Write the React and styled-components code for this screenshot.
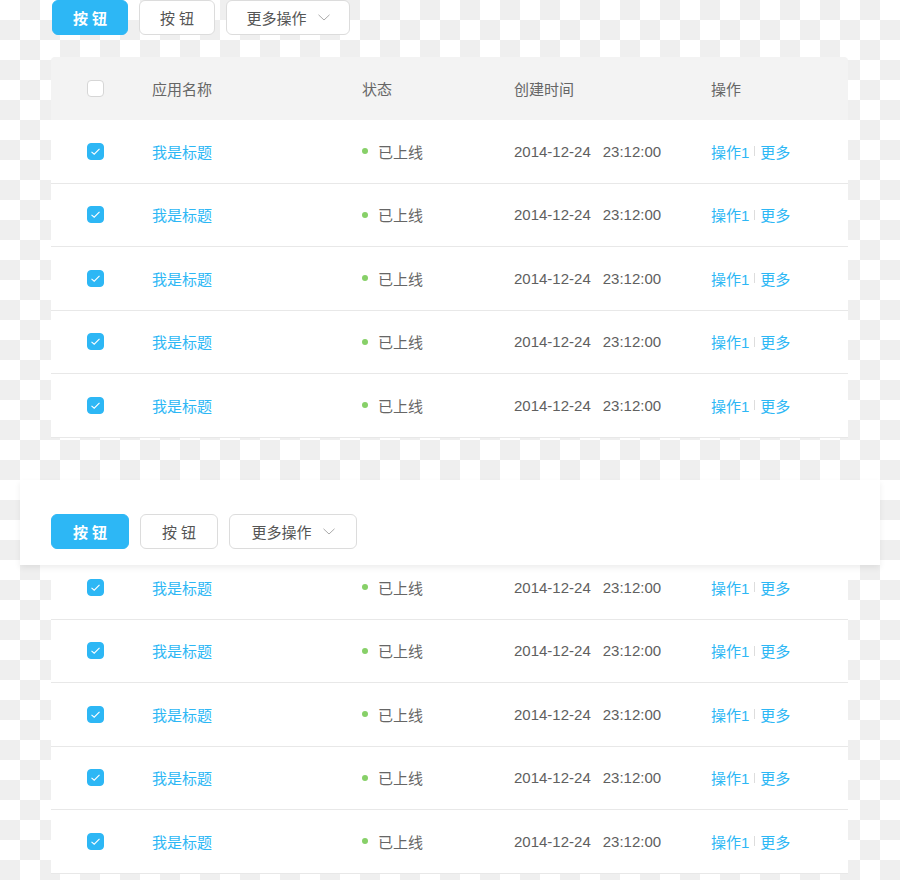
import styled, { createGlobalStyle } from 'styled-components';

const GlobalStyle = createGlobalStyle`
  body {
    margin: 0;
    font-family: "Liberation Sans", "Noto Sans CJK SC", sans-serif;
    background: repeating-conic-gradient(#efefef 0 25%, #ffffff 0 50%) 0 0 / 40px 40px;
  }
`;

const Page = styled.div`
  width: 900px;
  height: 880px;
  overflow: hidden;
`;

const TopToolbar = styled.div`
  display: flex;
  gap: 11px;
  padding-left: 52px;
  height: 35px;
`;

const FloatingToolbar = styled.div`
  position: relative;
  z-index: 2;
  display: flex;
  gap: 11px;
  margin: 42px 20px 0;
  padding: 34px 0 16px 31px;
  background: #ffffff;
  box-shadow: 0 3px 6px rgba(0, 0, 0, 0.07);
`;

const Button = styled.button`
  display: flex;
  align-items: center;
  justify-content: center;
  gap: 11px;
  box-sizing: border-box;
  height: 35px;
  width: ${(p) => p.$w}px;
  padding: 0;
  border-radius: 6px;
  font-family: inherit;
  font-size: 15px;
  cursor: pointer;
  border: 1px solid ${(p) => (p.$primary ? '#2db7f5' : '#dcdcdc')};
  background: ${(p) => (p.$primary ? '#2db7f5' : '#ffffff')};
  color: ${(p) => (p.$primary ? '#ffffff' : '#555555')};
  font-weight: ${(p) => (p.$primary ? 600 : 400)};
`;

const Table = styled.div`
  width: 797px;
  margin-left: 51px;
  margin-top: ${(p) => p.$top}px;
  position: relative;
  z-index: 1;
`;

const Row = styled.div`
  display: grid;
  grid-template-columns: 65px 210px 152px 197px 1fr;
  align-items: center;
  box-sizing: border-box;
  padding-left: 36px;
  height: ${(p) => (p.$head ? 63 : 63.5)}px;
  background: ${(p) => (p.$head ? '#f3f3f3' : '#ffffff')};
  border-radius: ${(p) => (p.$head ? '4px 4px 0 0' : '0')};
  border-bottom: ${(p) => (p.$head ? 'none' : '1px solid #e8e8e8')};
  font-size: 15px;
  color: #666666;
`;

const Box = styled.span`
  display: flex;
  align-items: center;
  justify-content: center;
  box-sizing: border-box;
  width: 17px;
  height: 17px;
  border-radius: 4px;
  background: ${(p) => (p.$checked ? '#2db7f5' : '#ffffff')};
  border: 1px solid ${(p) => (p.$checked ? '#2db7f5' : '#d6d6d6')};
`;

const Title = styled.span`
  color: #2db7f5;
`;

const Status = styled.span`
  display: flex;
  align-items: center;
  gap: 10px;
  &::before {
    content: '';
    width: 6px;
    height: 6px;
    border-radius: 50%;
    background: #87d068;
  }
`;

const DateCell = styled.span`
  display: flex;
  gap: 12px;
  color: #606060;
`;

const Ops = styled.span`
  display: flex;
  align-items: center;
  color: #2db7f5;
`;

const Divider = styled.span`
  width: 1px;
  height: 10px;
  margin: 0 5px;
  background: #dddddd;
`;

const Check = () => (
  <svg width="11" height="9" viewBox="0 0 11 9">
    <path d="M1.5 4.8 L4.2 7.2 L9.5 1.8" fill="none" stroke="#ffffff" strokeWidth="1.1" />
  </svg>
);

const Chevron = () => (
  <svg width="12" height="7" viewBox="0 0 12 7">
    <path d="M0.5 0.8 L6 6 L11.5 0.8" fill="none" stroke="#aaaaaa" strokeWidth="1" />
  </svg>
);

const Buttons = ({ wide }) => (
  <>
    <Button $primary $w={wide ? 78 : 76}>按 钮</Button>
    <Button $w={wide ? 78 : 76}>按 钮</Button>
    <Button $w={wide ? 128 : 124}>
      更多操作
      <Chevron />
    </Button>
  </>
);

const DataRow = () => (
  <Row>
    <Box $checked>
      <Check />
    </Box>
    <Title>我是标题</Title>
    <Status>已上线</Status>
    <DateCell>
      <span>2014-12-24</span>
      <span>23:12:00</span>
    </DateCell>
    <Ops>
      操作1
      <Divider />
      更多
    </Ops>
  </Row>
);

const rows = [1, 2, 3, 4, 5];

export default function App() {
  return (
    <>
      <GlobalStyle />
      <Page>
        <TopToolbar>
          <Buttons />
        </TopToolbar>
        <Table $top={22}>
          <Row $head>
            <Box />
            <span>应用名称</span>
            <span>状态</span>
            <span>创建时间</span>
            <span>操作</span>
          </Row>
          {rows.map((r) => (
            <DataRow key={r} />
          ))}
        </Table>

        <FloatingToolbar>
          <Buttons wide />
        </FloatingToolbar>
        <Table $top={-8.5}>
          {rows.map((r) => (
            <DataRow key={r} />
          ))}
        </Table>
      </Page>
    </>
  );
}
